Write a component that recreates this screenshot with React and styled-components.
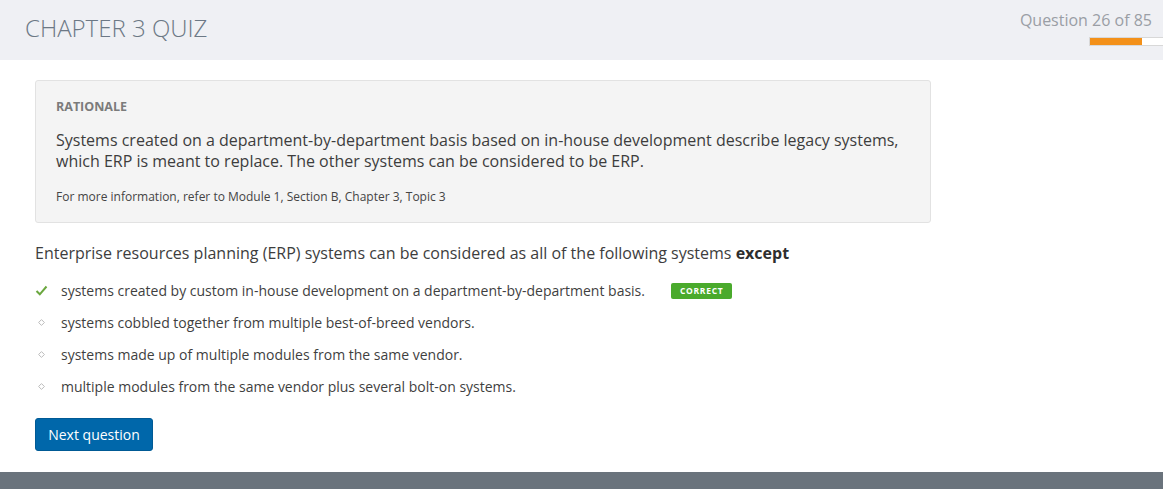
import React from 'react';
import styled, { createGlobalStyle } from 'styled-components';

const GlobalStyle = createGlobalStyle`
  html, body {
    margin: 0;
    padding: 0;
    background: #fff;
    font-family: "Open Sans", "Liberation Sans", Arial, sans-serif;
  }
`;

const Page = styled.div`
  display: flex;
  flex-direction: column;
  min-height: 489px;
`;

const Header = styled.header`
  height: 60px;
  background: #eff0f4;
  display: flex;
  justify-content: space-between;
  align-items: flex-start;
  padding-left: 25px;
  box-sizing: border-box;
`;

const Title = styled.h1`
  margin: 10px 0 0;
  font-size: 24px;
  font-weight: 300;
  line-height: 36px;
  color: #6c7885;
`;

const Progress = styled.div`
  display: flex;
  flex-direction: column;
  align-items: flex-end;
  padding-top: 9px;
  padding-right: 11px;
`;

const Counter = styled.div`
  font-size: 16px;
  line-height: 22px;
  color: #9a9ea5;
`;

const Track = styled.div`
  align-self: flex-end;
  margin-right: -11px;
  margin-top: 6px;
  width: 73px;
  height: 7px;
  background: #fff;
  border: 1px solid #d8d8d8;
  border-right: none;
`;

const Fill = styled.div`
  height: 100%;
  background: #f39019;
`;

const Main = styled.main`
  flex: 1;
  padding: 20px 0 20px 35px;
`;

const Rationale = styled.section`
  width: 896px;
  box-sizing: border-box;
  background: #f4f4f4;
  border: 1px solid #e2e2e2;
  border-radius: 3px;
  padding: 17px 20px 17px;
`;

const Label = styled.div`
  font-size: 12.5px;
  font-weight: 700;
  color: #7b7b7b;
  line-height: 18px;
  text-transform: uppercase;
`;

const Explanation = styled.p`
  margin: 14px 0 0;
  font-size: 16px;
  line-height: 21px;
  color: #3d3d3d;
`;

const Reference = styled.p`
  margin: 16px 0 0;
  font-size: 12px;
  line-height: 17px;
  color: #444;
`;

const Question = styled.p`
  margin: 19px 0 0;
  font-size: 16px;
  line-height: 22px;
  color: #3d3d3d;

  b {
    font-weight: 700;
    color: #2e2e2e;
  }
`;

const Options = styled.ul`
  list-style: none;
  margin: 17px 0 0;
  padding: 0;
  display: flex;
  flex-direction: column;
  gap: 13px;
`;

const Option = styled.li`
  display: flex;
  align-items: center;
  height: 19px;
  font-size: 14px;
  color: #3f3f3f;
`;

const Marker = styled.span`
  width: 26px;
  flex-shrink: 0;
  display: flex;
  align-items: center;
  padding-left: ${p => (p.$check ? '0' : '3px')};
  box-sizing: border-box;
`;

const Badge = styled.span`
  margin-left: 26px;
  background: #4aaa2c;
  color: #fff;
  font-size: 8.5px;
  font-weight: 700;
  letter-spacing: 0.7px;
  line-height: 16px;
  padding: 0 9px;
  border-radius: 2px;
`;

const NextButton = styled.button`
  margin-top: 22px;
  width: 118px;
  height: 33px;
  background: #0067aa;
  border: 1px solid #005a95;
  border-radius: 3px;
  color: #fff;
  font-family: inherit;
  font-size: 14px;
  cursor: pointer;
`;

const Footer = styled.footer`
  height: 17px;
  background: #6a737c;
`;

const Check = () => (
  <svg width="13" height="11" viewBox="0 0 13 11">
    <path d="M1.5 6 L4.8 9.3 L11.5 1.5" fill="none" stroke="#6aa73e" strokeWidth="2" />
  </svg>
);

const Diamond = () => (
  <svg width="7" height="7" viewBox="0 0 7 7">
    <path d="M3.5 0.6 L6.4 3.5 L3.5 6.4 L0.6 3.5 Z" fill="none" stroke="#bbb" strokeWidth="1" />
  </svg>
);

const answers = [
  { text: 'systems created by custom in-house development on a department-by-department basis.', correct: true },
  { text: 'systems cobbled together from multiple best-of-breed vendors.' },
  { text: 'systems made up of multiple modules from the same vendor.' },
  { text: 'multiple modules from the same vendor plus several bolt-on systems.' },
];

const App = () => {
  const current = 26;
  const total = 85;
  return (
    <Page>
      <GlobalStyle />
      <Header>
        <Title>CHAPTER 3 QUIZ</Title>
        <Progress>
          <Counter>Question {current} of {total}</Counter>
          <Track>
            <Fill style={{ width: '71%' }} />
          </Track>
        </Progress>
      </Header>
      <Main>
        <Rationale>
          <Label>Rationale</Label>
          <Explanation>
            Systems created on a department-by-department basis based on in-house development describe legacy systems,
            which ERP is meant to replace. The other systems can be considered to be ERP.
          </Explanation>
          <Reference>For more information, refer to Module 1, Section B, Chapter 3, Topic 3</Reference>
        </Rationale>
        <Question>
          Enterprise resources planning (ERP) systems can be considered as all of the following systems <b>except</b>
        </Question>
        <Options>
          {answers.map(a => (
            <Option key={a.text}>
              <Marker $check={a.correct}>{a.correct ? <Check /> : <Diamond />}</Marker>
              {a.text}
              {a.correct && <Badge>CORRECT</Badge>}
            </Option>
          ))}
        </Options>
        <NextButton>Next question</NextButton>
      </Main>
      <Footer />
    </Page>
  );
};

export default App;
